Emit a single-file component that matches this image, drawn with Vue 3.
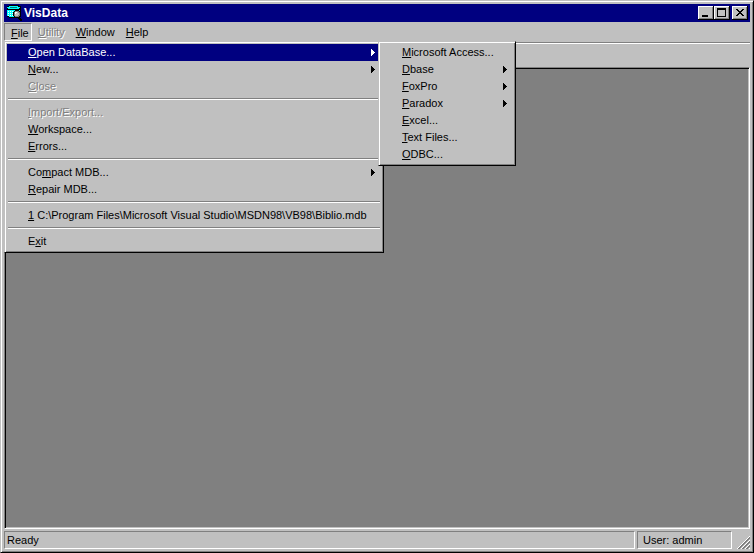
<script setup>
const menuBar = [
  { key: 'F', rest: 'ile', open: true },
  { key: 'U', rest: 'tility', disabled: true },
  { key: 'W', rest: 'indow' },
  { key: 'H', rest: 'elp' },
]

// Each entry: text before the access key, the key itself, text after it.
const fileMenu = [
  { key: 'O', post: 'pen DataBase...', sub: true, active: true },
  { key: 'N', post: 'ew...', sub: true },
  { key: 'C', post: 'lose', disabled: true },
  { sep: true },
  { key: 'I', post: 'mport/Export...', disabled: true },
  { key: 'W', post: 'orkspace...' },
  { key: 'E', post: 'rrors...' },
  { sep: true },
  { pre: 'Co', key: 'm', post: 'pact MDB...', sub: true },
  { key: 'R', post: 'epair MDB...' },
  { sep: true },
  { key: '1', post: ' C:\\Program Files\\Microsoft Visual Studio\\MSDN98\\VB98\\Biblio.mdb' },
  { sep: true },
  { pre: 'E', key: 'x', post: 'it' },
]

const openMenu = [
  { key: 'M', post: 'icrosoft Access...' },
  { key: 'D', post: 'base', sub: true },
  { key: 'F', post: 'oxPro', sub: true },
  { key: 'P', post: 'aradox', sub: true },
  { key: 'E', post: 'xcel...' },
  { key: 'T', post: 'ext Files...' },
  { key: 'O', post: 'DBC...' },
]

const menus = [
  { name: 'file', label: 'File', items: fileMenu },
  { name: 'submenu', label: 'Open DataBase', items: openMenu },
]

// Diagonal ridges of the size grip, one unit square per pixel.
const ridges = (phases) => {
  let d = ''
  for (let y = 0; y < 13; y++) {
    for (let x = 12 - y; x < 13; x++) {
      if (phases.includes((x + y - 12) % 4)) d += `M${x} ${y}h1v1h-1z`
    }
  }
  return d
}
const gripLight = ridges([0])
const gripDark = ridges([1, 2])
</script>

<template>
  <div class="window">
    <header class="titlebar">
      <svg class="app-icon" width="16" height="16" viewBox="0 0 16 16" shape-rendering="crispEdges" aria-hidden="true">
        <defs>
          <pattern id="dither" width="2" height="2" patternUnits="userSpaceOnUse">
            <path fill="#0ff" d="M0 0h2v2H0z" />
            <path fill="#fff" d="M0 0h1v1H0z" />
          </pattern>
        </defs>
        <path fill="#000" d="M3 0h10v1h2v11h-2v1H3v-1H1V1h2z" />
        <path fill="#0ff" d="M3 1h9v1h2v1h-1v1H2V3H1V2h2z" />
        <path fill="#008080" d="M4 2h7v1H4z" />
        <path fill="url(#dither)" d="M1 5h13v6h-1v1H3v-1H1z" />
        <path fill="#0ff" d="M1 5h1v6H1zM13 5h1v5h-1z" />
        <path fill="#000" d="M9 5h4v1h1v1h1v4h-1v1h-1v1H9v-1H8v-1H7V7h1V6h1z" />
        <path fill="#808080" d="M9 6h4v1h1v4h-1v1H9v-1H8V7h1z" />
        <path fill="#c0c0c0" d="M9 7h3v1h1v2h-1v1H9z" />
        <path fill="#fff" d="M9 7h2v1h-1v1H9z" />
        <path fill="#000" d="M13 12h1v1h1v1h1v2h-2v-1h-1v-1h-1v-1h1z" />
      </svg>
      <h1>VisData</h1>
      <div class="controls">
        <button type="button" aria-label="Minimize">
          <svg width="12" height="10" viewBox="0 0 12 10" shape-rendering="crispEdges"><path d="M2 7h6v2H2z" /></svg>
        </button>
        <button type="button" aria-label="Maximize">
          <svg width="12" height="10" viewBox="0 0 12 10" shape-rendering="crispEdges"><path fill-rule="evenodd" d="M1 0h9v9H1zM2 2v6h7V2z" /></svg>
        </button>
        <button type="button" class="close" aria-label="Close">
          <svg width="12" height="10" viewBox="0 0 12 10" shape-rendering="crispEdges"><path d="M2 1h2v1h1v1h2V2h1V1h2v1H9v1H8v1H7v1h1v1h1v1h1v1H8V7H7V6H5v1H4v1H2V7h1V6h1V5h1V4H4V3H3V2H2z" /></svg>
        </button>
      </div>
    </header>

    <div class="menu-area">
      <nav class="menubar" aria-label="Main menu">
        <button v-for="m in menuBar" :key="m.key" type="button" :class="{ open: m.open }" :disabled="m.disabled">
          <span><u>{{ m.key }}</u>{{ m.rest }}</span>
        </button>
      </nav>

      <div class="popups">
        <div v-for="menu in menus" :key="menu.name" class="popup" :class="menu.name" role="menu" :aria-label="menu.label">
          <template v-for="(item, i) in menu.items" :key="i">
            <hr v-if="item.sep">
            <button v-else type="button" role="menuitem" :class="{ active: item.active }" :disabled="item.disabled">
              <span>{{ item.pre }}<u>{{ item.key }}</u>{{ item.post }}</span>
              <svg v-if="item.sub" class="arrow" width="4" height="7" viewBox="0 0 4 7" shape-rendering="crispEdges" aria-hidden="true"><path d="M0 0h1v1h1v1h1v1h1v1H3v1H2v1H1v1H0z" /></svg>
            </button>
          </template>
        </div>
      </div>
    </div>

    <div class="toolbar"></div>
    <main class="workspace"></main>

    <footer class="statusbar">
      <div class="panel message">Ready</div>
      <div class="panel user">User: admin</div>
      <svg class="grip" width="13" height="13" viewBox="0 0 13 13" shape-rendering="crispEdges" aria-hidden="true">
        <path fill="#fff" :d="gripLight" />
        <path fill="#808080" :d="gripDark" />
      </svg>
    </footer>
  </div>
</template>

<style>
body {
  margin: 0;
  background: #c0c0c0;
}
</style>

<style scoped>
.window {
  box-sizing: border-box;
  min-height: 100vh;
  display: flex;
  flex-direction: column;
  padding: 3px;
  border: 1px solid;
  border-color: #c0c0c0 #000 #000 #c0c0c0;
  background: #c0c0c0;
  box-shadow: inset 1px 1px #fff, inset -1px -1px #808080;
  color: #000;
  font: 11px/13px "Liberation Sans", Arial, sans-serif;
}

button {
  margin: 0;
  padding: 0;
  border: 0;
  border-radius: 0;
  background: transparent;
  color: inherit;
  font: inherit;
}

button:disabled {
  color: #808080;
  text-shadow: 1px 1px #fff;
}

.titlebar {
  display: flex;
  align-items: center;
  height: 18px;
  padding: 0 2px;
  background: #000080;
  color: #fff;
}

.titlebar h1 {
  flex: 1;
  margin: 0 0 0 2px;
  font-size: 12px;
  line-height: 18px;
}

.controls {
  display: flex;
}

.controls button {
  box-sizing: border-box;
  width: 16px;
  height: 14px;
  padding: 2px;
  background: #c0c0c0;
  box-shadow: inset -1px -1px #000, inset 1px 1px #fff, inset -2px -2px #808080;
}

.controls svg {
  display: block;
}

.controls .close {
  margin-left: 2px;
}

.menu-area {
  position: relative;
  border-bottom: 1px solid #808080;
}

.menubar {
  display: flex;
  height: 18px;
  padding: 1px 0;
}

.menubar button {
  padding: 0 5px 0 6px;
}

.menubar .open {
  padding: 2px 2px 0 6px;
  border: 1px solid;
  border-color: #808080 #fff #fff #808080;
}

.popups {
  position: absolute;
  z-index: 1;
  top: 19px;
  left: 0;
  display: flex;
  align-items: flex-start;
}

.popup {
  box-sizing: border-box;
  padding: 2px;
  border: 1px solid;
  border-color: #c0c0c0 #000 #000 #c0c0c0;
  background: #c0c0c0;
  box-shadow: inset 1px 1px #fff, inset -1px -1px #808080;
}

.popup button {
  box-sizing: border-box;
  display: flex;
  align-items: center;
  justify-content: space-between;
  width: 100%;
  height: 17px;
  padding: 0 6px 0 21px;
  text-align: left;
  white-space: pre;
}

.popup .active {
  background: #000080;
  color: #fff;
}

.popup hr {
  margin: 3px 1px 4px;
  border: 0;
  border-top: 1px solid #808080;
  border-bottom: 1px solid #fff;
}

.file {
  min-width: 380px;
}

.submenu {
  min-width: 138px;
  margin-left: -6px;
}

.arrow {
  fill: currentColor;
}

.toolbar {
  height: 23px;
  border-top: 1px solid #fff;
}

.workspace {
  flex: 1;
  border: 1px solid;
  border-color: #808080 #fff #fff #808080;
  background: #808080;
  box-shadow: inset 1px 1px #000, inset -1px -1px #c0c0c0;
}

.statusbar {
  display: flex;
  gap: 2px;
  margin-top: 2px;
}

.panel {
  box-sizing: border-box;
  height: 18px;
  padding: 2px;
  border: 1px solid;
  border-color: #808080 #fff #fff #808080;
}

.message {
  flex: 1;
}

.user {
  width: 95px;
  padding-left: 5px;
}

.grip {
  align-self: flex-end;
  margin-left: 3px;
}
</style>
